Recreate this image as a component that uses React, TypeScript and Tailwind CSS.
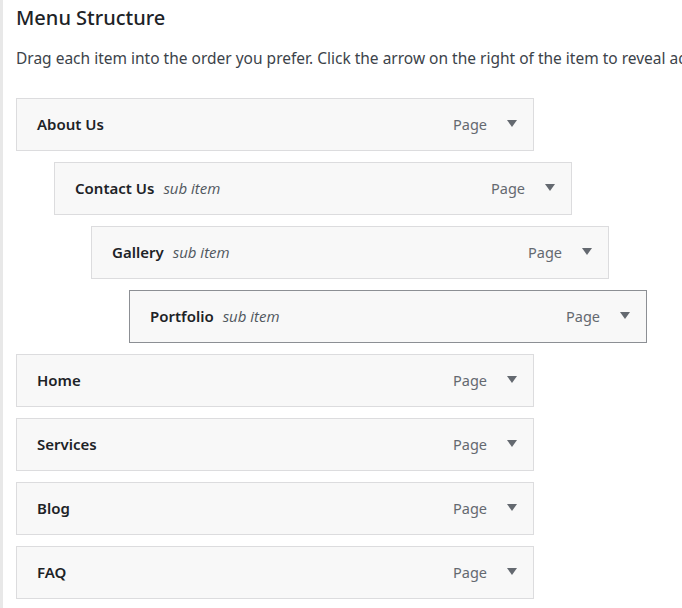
import React from "react";

const items = [
  { title: "About Us", depth: 0 },
  { title: "Contact Us", depth: 1 },
  { title: "Gallery", depth: 2 },
  { title: "Portfolio", depth: 3, active: true },
  { title: "Home", depth: 0 },
  { title: "Services", depth: 0 },
  { title: "Blog", depth: 0 },
  { title: "FAQ", depth: 0 },
];

const indent = ["ml-0", "ml-[38px]", "ml-[75px]", "ml-[113px]"];

function MenuItem({ title, depth, active }: { title: string; depth: number; active?: boolean }) {
  return (
    <div
      className={`${indent[depth]} w-[518px] h-[53px] flex items-center justify-between bg-[#f8f8f8] border ${
        active ? "border-[#8c8f94]" : "border-[#dcdcde]"
      } pl-[20px] pr-[16px]`}
    >
      <div className="flex items-baseline gap-[9px]">
        <span className="text-[15px] font-semibold text-[#1d2327]">{title}</span>
        {depth > 0 && (
          <span className="text-[15px] italic text-[#50575e]" style={{ fontFamily: '"Open Sans", sans-serif' }}>
            sub item
          </span>
        )}
      </div>
      <div className="flex items-center gap-[20px]">
        <span className="text-[14.5px] text-[#646970]">Page</span>
        <svg width="10" height="7" viewBox="0 0 10 7" className="mb-[3px]">
          <path d="M0 0 L10 0 L5 7 Z" fill="#646970" />
        </svg>
      </div>
    </div>
  );
}

export default function App() {
  return (
    <div
      className="w-[682px] h-[608px] overflow-hidden bg-white flex"
      style={{ fontFamily: '"Noto Sans", "Open Sans", sans-serif' }}
    >
      <div className="w-[3px] bg-[#e8e8e8] shrink-0" />
      <div className="pl-[13px] pt-[4px] whitespace-nowrap">
        <h2 className="text-[20px] leading-[28px] font-medium text-[#1d2327]">Menu Structure</h2>
        <p className="mt-[15px] text-[15.5px] leading-[22px] text-[#3c434a]">
          Drag each item into the order you prefer. Click the arrow on the right of the item to reveal additional configuration options.
        </p>
        <div className="mt-[29px] flex flex-col gap-[11px]">
          {items.map((it) => (
            <MenuItem key={it.title} {...it} />
          ))}
        </div>
      </div>
    </div>
  );
}
